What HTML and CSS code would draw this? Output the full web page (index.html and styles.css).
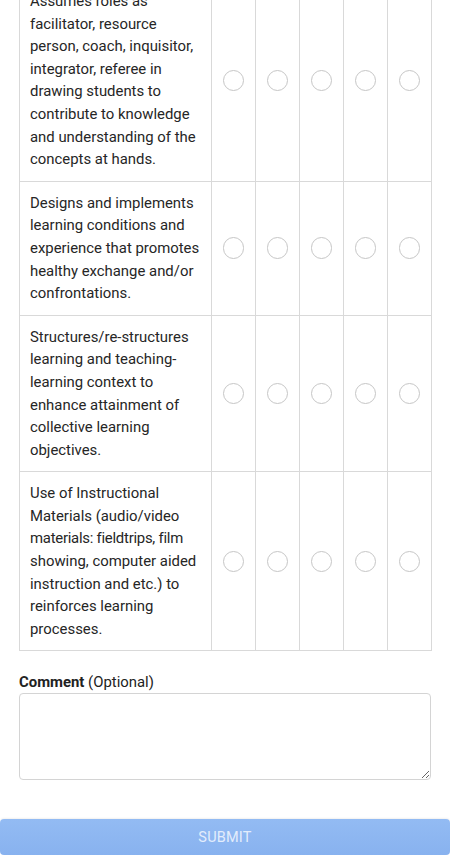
FILE: index.html
```html
<!DOCTYPE html>
<html>
<head>
<meta charset="utf-8">
<link rel="stylesheet" href="styles.css">
</head>
<body>
<div class="page">
  <table class="grid">
    <colgroup>
      <col class="c-text"><col class="c-opt"><col class="c-opt"><col class="c-opt"><col class="c-opt"><col class="c-opt">
    </colgroup>
    <tr>
      <td class="q">Assumes roles as<br>facilitator, resource<br>person, coach, inquisitor,<br>integrator, referee in<br>drawing students to<br>contribute to knowledge<br>and understanding of the<br>concepts at hands.</td>
      <td><span class="radio"></span></td><td><span class="radio"></span></td><td><span class="radio"></span></td><td><span class="radio"></span></td><td><span class="radio"></span></td>
    </tr>
    <tr>
      <td class="q">Designs and implements<br>learning conditions and<br>experience that promotes<br>healthy exchange and/or<br>confrontations.</td>
      <td><span class="radio"></span></td><td><span class="radio"></span></td><td><span class="radio"></span></td><td><span class="radio"></span></td><td><span class="radio"></span></td>
    </tr>
    <tr>
      <td class="q">Structures/re-structures<br>learning and teaching-<br>learning context to<br>enhance attainment of<br>collective learning<br>objectives.</td>
      <td><span class="radio"></span></td><td><span class="radio"></span></td><td><span class="radio"></span></td><td><span class="radio"></span></td><td><span class="radio"></span></td>
    </tr>
    <tr>
      <td class="q">Use of Instructional<br>Materials (audio/video<br><span class="tight">materials: fieldtrips, film</span><br>showing, computer aided<br>instruction and etc.) to<br>reinforces learning<br>processes.</td>
      <td><span class="radio"></span></td><td><span class="radio"></span></td><td><span class="radio"></span></td><td><span class="radio"></span></td><td><span class="radio"></span></td>
    </tr>
  </table>

  <div class="comment">
    <label class="label"><b>Comment</b> (Optional)</label>
    <textarea class="box"></textarea>
  </div>
</div>
<button class="submit">SUBMIT</button>
</body>
</html>
```
FILE: styles.css
```css
html, body {
  margin: 0;
  padding: 0;
  background: #ffffff;
}
body {
  font-family: Roboto, "Noto Sans", sans-serif;
  color: #222222;
  overflow: hidden;
  height: 855px;
}
.page {
  padding: 0 19px;
  margin-top: -21px;
}
.grid {
  border-collapse: collapse;
  width: 412px;
  table-layout: fixed;
}
.c-text { width: 192px; }
.c-opt { width: 44px; }
.grid td {
  border: 1px solid #d9d9d9;
  vertical-align: middle;
  text-align: center;
  padding: 0;
}
.grid td.q {
  text-align: left;
  padding: 10px 0 10px 10px;
  font-size: 14.9px;
  line-height: 22.6px;
  color: #262626;
  white-space: nowrap;
}
.tight {
  letter-spacing: -0.25px;
}
.radio {
  display: inline-block;
  width: 19.5px;
  height: 19.5px;
  border: 1.25px solid #c6c6c6;
  border-radius: 50%;
  vertical-align: middle;
}
.comment {
  margin-top: 21px;
  display: flex;
  flex-direction: column;
  gap: 0;
}
.label {
  font-size: 14.9px;
  line-height: 21px;
  color: #222222;
}
.label b { font-weight: 700; }
.box {
  width: 412px;
  height: 87px;
  box-sizing: border-box;
  border: 1px solid #d4d4d4;
  border-radius: 4px;
  resize: vertical;
  margin: 0;
  font-family: inherit;
}
.submit {
  display: block;
  margin-top: 39px;
  width: 450px;
  height: 36px;
  border: none;
  border-radius: 4px;
  background: linear-gradient(#93bbf3, #88b2ef);
  color: #e3edfc;
  font-family: Roboto, "Noto Sans", sans-serif;
  font-size: 14.5px;
  letter-spacing: 0.2px;
  box-shadow: 0 -1px 2px rgba(0,0,0,0.06);
}
```
